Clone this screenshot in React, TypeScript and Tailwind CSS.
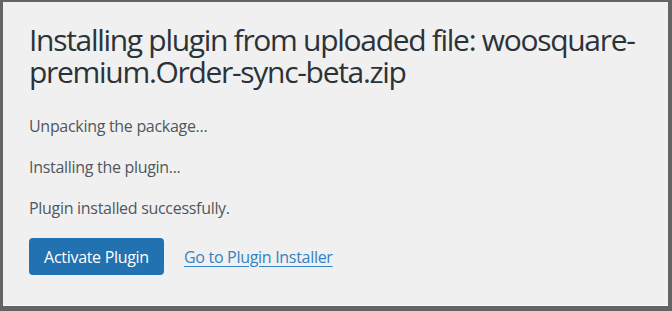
import React from 'react';

const steps = ['Unpacking the package...', 'Installing the plugin...', 'Plugin installed successfully.'];

export default function App() {
  return (
    <div
      className="w-[672px] h-[311px] border-t-2 border-l-[3px] border-r-4 border-b-[5px] border-[#646464] bg-[#f0f0f0]"
      style={{ fontFamily: '"Open Sans", "Noto Sans", sans-serif' }}
    >
      <div className="h-full border-b border-[#fafafa] pl-[26px] pt-[22px]">
        <h1 className="whitespace-nowrap text-[30px] leading-[32px] text-[#2c3338] tracking-[-1.3px]">
          Installing plugin from uploaded file: woosquare-
          <br />
          premium.Order-sync-beta.zip
        </h1>
        <div className="mt-[27px] flex flex-col gap-[19px] text-[16px] leading-[22px] text-[#50575e] tracking-[-0.3px]">
          {steps.map((s) => (
            <p key={s}>{s}</p>
          ))}
        </div>
        <div className="mt-[19px] flex items-center gap-[20px]">
          <button className="h-[37px] w-[135px] rounded-[4px] bg-[#2271b1] text-[16px] text-white tracking-[-0.3px]">
            Activate Plugin
          </button>
          <a href="#" className="text-[16px] text-[#3582c4] underline underline-offset-[3px] tracking-[-0.3px]">
            Go to Plugin Installer
          </a>
        </div>
      </div>
    </div>
  );
}
